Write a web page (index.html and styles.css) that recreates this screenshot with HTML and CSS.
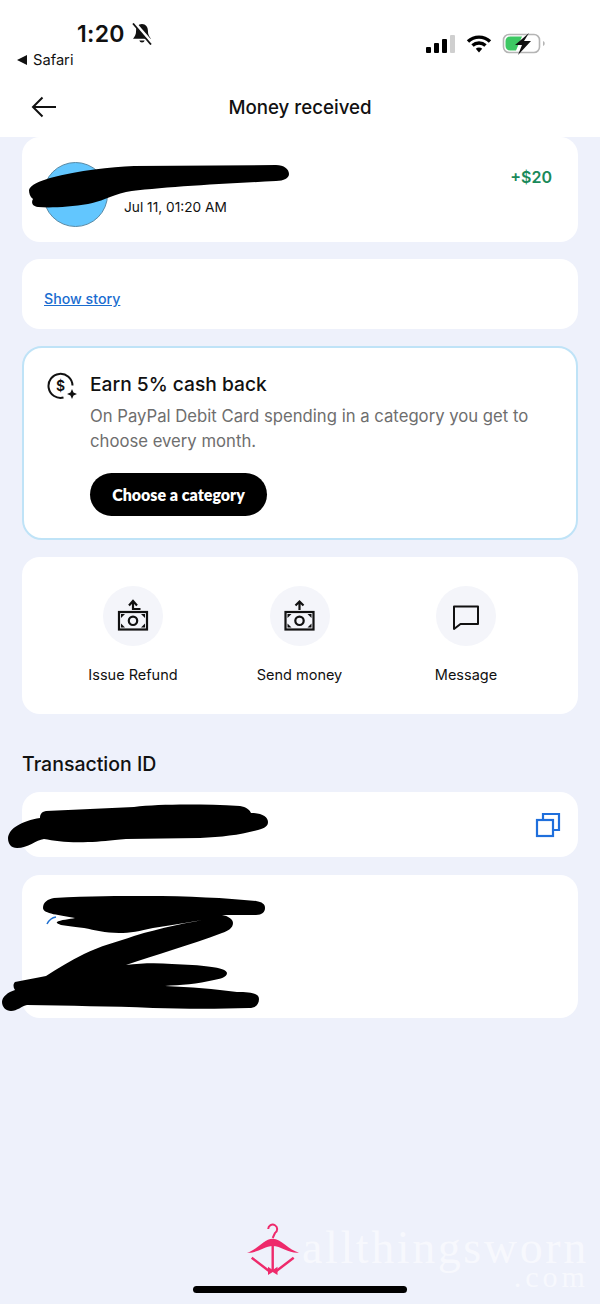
FILE: index.html
```html
<!DOCTYPE html>
<html lang="en">
<head>
<meta charset="utf-8">
<title>Money received</title>
<link rel="stylesheet" href="styles.css">
</head>
<body>
<div class="page">
  <header class="top">
    <div class="status">
      <div class="status-left">
        <div class="time-row">
          <span class="time">1:20</span>
          <svg class="bell" viewBox="0 0 20 22" width="20" height="22">
            <path d="M10 1c-3.800 0-5.900 3-5.900 6.500 0 4-1.200 5.800-3.100 8.300h18c-1.900-2.500-3.100-4.300-3.100-8.300C15.900 4 13.800 1 10 1z" fill="#111"/>
            <path d="M7.300 17.500a2.800 2.800 0 0 0 5.400 0z" fill="#111"/>
            <path d="M2.500 0l17 19.500" stroke="#fff" stroke-width="3.500"/>
            <path d="M1 0.500l18 21" stroke="#111" stroke-width="1.800"/>
          </svg>
        </div>
        <div class="back-app"><span class="tri"></span><span>Safari</span></div>
      </div>
      <div class="status-right">
        <div class="signal"><i class="b1"></i><i class="b2"></i><i class="b3"></i><i class="b4"></i></div>
        <svg class="wifi" viewBox="0 0 26 18" width="26" height="18">
          <path d="M2 6.500a16 16 0 0 1 22 0" fill="none" stroke="#000" stroke-width="3.400"/>
          <path d="M6.500 10.500a9.500 9.500 0 0 1 13 0" fill="none" stroke="#000" stroke-width="3.400"/>
          <path d="M9.800 13.800a4.600 4.600 0 0 1 6.400 0L13 17.500z" fill="#000"/>
        </svg>
        <svg class="battery" viewBox="0 0 44 24" width="44" height="24">
          <rect x="1.500" y="2.500" width="36" height="18" rx="5.500" fill="#fff" stroke="#b5b5b5" stroke-width="1.600"/>
          <path d="M3.500 9a4.500 4.500 0 0 1 4.500-4.500h12L14 18.500H8A4.500 4.500 0 0 1 3.500 14z" fill="#3dc863"/>
          <path d="M41 9c1.200.5 1.700 1.300 1.700 2.500s-.5 2-1.700 2.500z" fill="#b5b5b5"/>
          <path d="M27 1 13 13h7l-4 10 13-14h-7z" fill="#111"/>
        </svg>
      </div>
    </div>
    <div class="nav">
      <svg class="back" viewBox="0 0 26 22" width="26" height="22">
        <path d="M25 11H2M11.500 1.500 2 11l9.500 9.500" fill="none" stroke="#111" stroke-width="2"/>
      </svg>
      <h1 class="nav-title">Money received</h1>
    </div>
  </header>

  <main class="content">
    <section class="card party">
      <div class="avatar"></div>
      <div class="party-info"><span class="date">Jul 11, 01:20 AM</span></div>
      <span class="amount">+$20</span>
    </section>

    <section class="card story">
      <a class="link" href="#">Show story</a>
    </section>

    <section class="card promo">
      <svg class="promo-icon" viewBox="0 0 34 34" width="34" height="34">
        <path d="M16.500 27.500A12 12 0 1 1 25.500 15.500" fill="none" stroke="#111" stroke-width="2"/>
        <text class="dollar" x="13.500" y="20.500" text-anchor="middle">$</text>
        <path d="M25 19l1.500 3.500 3.500 1.500-3.500 1.500-1.500 3.500-1.500-3.500-3.500-1.500 3.500-1.500z" fill="#111"/>
      </svg>
      <div class="promo-body">
        <h2 class="promo-title">Earn 5% cash back</h2>
        <p class="promo-text">On PayPal Debit Card spending in a category you get to choose every month.</p>
        <button class="cta">Choose a category</button>
      </div>
    </section>

    <section class="card actions">
      <div class="action">
        <span class="action-icon">
          <svg viewBox="0 0 60 60" width="60" height="60">
            <g fill="none" stroke="#111" stroke-width="2.200">
              <rect x="16" y="26" width="28" height="17.500"/>
              <circle cx="30" cy="34.800" r="4.200"/>
            </g>
            <path d="M18 28h4l-4 4zM42 28h-4l4 4zM18 41.500h4l-4-4zM42 41.500h-4l4-4z" fill="#111"/>
            <path d="M37.500 23h-7.500v-7.500M26 19.500l4-4.500 4 4.500" fill="none" stroke="#111" stroke-width="2.200"/>
          </svg>
        </span>
        <span class="action-label">Issue Refund</span>
      </div>
      <div class="action">
        <span class="action-icon">
          <svg viewBox="0 0 60 60" width="60" height="60">
            <g fill="none" stroke="#111" stroke-width="2.200">
              <rect x="15.500" y="26" width="28" height="17.500"/>
              <circle cx="29.500" cy="34.800" r="4.200"/>
            </g>
            <path d="M17.500 28h4l-4 4zM41.500 28h-4l4 4zM17.500 41.500h4l-4-4zM41.500 41.500h-4l4-4z" fill="#111"/>
            <path d="M29.500 24V15.500M25.500 19.500l4-4 4 4" fill="none" stroke="#111" stroke-width="2.200"/>
          </svg>
        </span>
        <span class="action-label">Send money</span>
      </div>
      <div class="action">
        <span class="action-icon">
          <svg viewBox="0 0 60 60" width="60" height="60">
            <path d="M18 20.500h24v17.500H24.500L18 43z" fill="none" stroke="#111" stroke-width="2" stroke-linejoin="round"/>
          </svg>
        </span>
        <span class="action-label">Message</span>
      </div>
    </section>

    <h2 class="section-title">Transaction ID</h2>

    <section class="card txn">
      <svg class="copy" viewBox="0 0 26 26" width="26" height="26">
        <path d="M8 7V2h16v16h-6" fill="none" stroke="#1f6fdc" stroke-width="2.200"/>
        <rect x="2" y="8" width="16" height="16" fill="none" stroke="#1f6fdc" stroke-width="2.200"/>
      </svg>
    </section>

    <section class="card details"></section>
  </main>

  <svg class="scribbles" viewBox="0 0 600 1304" width="600" height="1304">
    <path d="M47 924Q50 918 56 917" fill="none" stroke="#1e6fd0" stroke-width="1.500"/>
    <path d="M29 190C30 185 40 181 50 178C80 170 110 167 134 166L276 165C284 165 289 169 289 174C289 178 284 181 276 181C220 184 160 187 126 192C110 196 100 202 88 204C70 207 50 208 38 207C32 206 31 202 33 199C30 197 29 193 29 190Z"/>
    <path d="M8 838C9 828 22 821 40 818C40 815 41 812 46 811L134 807C160 804 200 804 240 806C246 807 250 810 251 813C262 813 268 817 268 822C268 826 265 828 258 830C240 835 222 837 200 838L126 839C110 840 100 842 88 842C70 843 55 841 44 839C36 840 28 848 17 848C11 848 8 844 8 838Z"/>
    <path d="M43 908C43 902 48 899 54 898C90 896 120 896 145 896C190 896 225 898 256 901C262 902 265 904 265 908C265 912 262 915 256 915L222 915C228 916 233 919 233 923C233 928 228 931 222 933C190 945 155 955 126 965C142 963 158 963 172 964C200 965 227 967 227 973C227 977 220 979 214 980C198 984 180 985 165 986C190 987 215 989 237 992C250 992 259 993 259 999C259 1005 255 1008 249 1008C220 1009 185 1009 153 1008C110 1006 70 1006 27 1005C22 1006 17 1011 11 1011C6 1011 2 1007 2 1002C2 997 8 992 15 990C13 987 13 984 15 982C25 980 36 978 46 976C58 968 70 961 84 954C100 946 117 942 134 936C160 928 190 922 214 918C195 921 175 925 153 928C140 931 130 933 119 933C105 933 95 930 84 928C75 927 68 926 61 925C58 924 56 923 57 922C60 920 70 919 75 918C60 915 43 914 43 908Z"/>
  </svg>

  <div class="watermark">
    <svg class="wm-logo" viewBox="0 0 54 56" width="54" height="56">
      <path d="M22.200 7A4.500 4.500 0 1 1 29 11L26.700 16" fill="none" stroke="#ee2a6b" stroke-width="2"/>
      <path d="M1 30.700C11 28 18 16.700 26.700 16.700C35 16.700 43 28 53 30.700C44 32 35 24 26.700 24C18 24 10 32 1 30.700Z" fill="#ee2a6b"/>
      <path d="M26.700 22V49M5.700 35.700L23 49M47.700 35.700L30.400 49" fill="none" stroke="#ee2a6b" stroke-width="2.400"/>
      <path d="M22 44.700l4.700 3.300 4.800-3.300V53l-4.800-3-4.700 3z" fill="#ee2a6b"/>
    </svg>
    <div class="wm-text">
      <span class="wm-name">allthingsworn</span>
      <span class="wm-com">.com</span>
    </div>
  </div>
  <div class="home-bar"></div>
</div>
</body>
</html>
```

FILE: styles.css
```css
* { box-sizing: border-box; }
html, body { margin: 0; padding: 0; }
body { font-family: Inter, "Liberation Sans", sans-serif; color: #111; }

.page {
  position: relative;
  width: 600px;
  height: 1304px;
  overflow: hidden;
  background: #eef1fb;
}

.top { height: 137px; background: #fff; }

.status {
  height: 78px;
  display: flex;
  justify-content: space-between;
}
.status-left { padding: 20px 0 0 17px; }
.time-row { display: flex; align-items: center; gap: 7px; padding-left: 60px; height: 28px; }
.time { font-size: 23px; font-weight: 600; letter-spacing: .3px; }
.bell { display: block; }
.back-app { display: flex; align-items: center; gap: 6px; margin-top: 2px; font-size: 14.700px; height: 20px; }
.tri {
  width: 0; height: 0;
  border-style: solid;
  border-width: 5px 10px 5px 0;
  border-color: transparent #111 transparent transparent;
}
.status-right {
  display: flex;
  align-items: center;
  height: 56px;
  padding: 32px 54px 0 0;
}
.signal { display: flex; align-items: flex-end; gap: 3px; height: 18px; margin-right: 11px; }
.signal i { display: block; width: 5px; background: #000; border-radius: 1px; }
.signal .b1 { height: 6px; }
.signal .b2 { height: 10px; }
.signal .b3 { height: 14px; }
.signal .b4 { height: 18px; background: #cfcfcf; }
.wifi { margin-right: 10px; }

.nav {
  position: relative;
  height: 59px;
  display: flex;
  align-items: center;
  justify-content: center;
}
.back { position: absolute; left: 31px; top: 18px; }
.nav-title { margin: 0; font-size: 18.700px; font-weight: 450; }

.content {
  display: flex;
  flex-direction: column;
  gap: 17px;
  padding: 0 22px;
}
.card { background: #fff; border-radius: 18px; }

.party { height: 105px; display: flex; padding: 25px 26px 0 21px; }
.avatar {
  width: 65px; height: 65px;
  border-radius: 50%;
  background: #62c6fe;
  border: 1px solid #5a8aa5;
}
.party-info { flex: 1; padding: 35px 0 0 16px; }
.date { font-size: 13.700px; line-height: 20px; display: block; }
.amount { color: #1a8a5a; font-size: 16px; font-weight: 600; line-height: 30px; }

.story { height: 70px; display: flex; align-items: center; padding: 9px 0 0 22px; }
.link { color: #1a6dd0; font-size: 14.200px; font-weight: 500; }

.promo {
  height: 194px;
  display: flex;
  gap: 9px;
  padding: 21px 20px 0 23px;
  border: 2px solid #bfe3f7;
  border-radius: 20px;
}
.promo-icon { flex: none; margin-top: 1px; }
.dollar { font-size: 14px; font-weight: 600; fill: #111; }
.promo-title { margin: 0 0 5px; font-size: 19.200px; line-height: 30px; font-weight: 450; }
.promo-text { margin: 0 0 19px; font-size: 16.700px; line-height: 25px; color: #6e6e6e; }
.cta {
  display: block;
  width: 177px; height: 43px;
  border: 0;
  border-radius: 22px;
  background: #000;
  color: #fff;
  font-family: Lato, sans-serif;
  font-size: 16px;
  font-weight: 800;
}

.actions {
  height: 157px;
  display: grid;
  grid-template-columns: repeat(3, 166.500px);
  justify-content: center;
  padding: 29px 1px 0 0;
}
.action { display: flex; flex-direction: column; align-items: center; gap: 19px; }
.action-icon {
  width: 60px; height: 60px;
  border-radius: 50%;
  background: #f4f5fa;
  display: block;
}
.action-icon svg { display: block; }
.action-label { font-size: 14.500px; line-height: 20px; }

.section-title { margin: 20px 0 -2px; font-size: 19.500px; line-height: 26px; font-weight: 500; }

.txn { height: 65px; display: flex; justify-content: flex-end; align-items: center; padding: 0 17px 0 0; }
.copy { display: block; }
.details { height: 143px; margin-top: 1px; }

.scribbles { position: absolute; left: 0; top: 0; pointer-events: none; }

.watermark { position: absolute; left: 246px; top: 1222px; display: flex; gap: 2px; }
.wm-logo { flex: none; }
.wm-text { display: flex; flex-direction: column; align-items: flex-end; margin-top: 5px; }
.wm-name {
  font-family: "Liberation Serif", serif;
  font-size: 46px;
  line-height: 42px;
  letter-spacing: 2.600px;
  color: rgba(255, 255, 255, .55);
}
.wm-com {
  font-family: "Liberation Serif", serif;
  font-size: 30px;
  line-height: 16px;
  letter-spacing: 4px;
  color: rgba(255, 255, 255, .55);
}

.home-bar {
  position: absolute;
  left: 193px; top: 1286px;
  width: 214px; height: 7px;
  border-radius: 4px;
  background: #000;
}
```
